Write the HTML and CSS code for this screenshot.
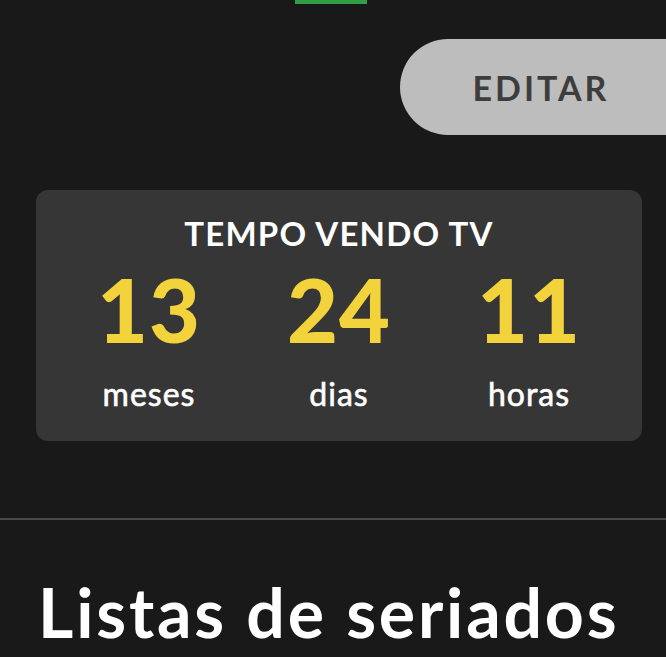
FILE: index.html
```html
<!DOCTYPE html>
<html lang="pt">
<head>
<meta charset="utf-8">
<link rel="stylesheet" href="styles.css">
</head>
<body>
<div class="page">
  <div class="tabbar"><span class="tab-indicator"></span></div>
  <div class="actions"><button class="edit-btn">EDITAR</button></div>
  <section class="stats-card">
    <h2 class="stats-title">TEMPO VENDO TV</h2>
    <div class="stats-grid">
      <div class="stat"><span class="stat-value">13</span><span class="stat-label">meses</span></div>
      <div class="stat"><span class="stat-value">24</span><span class="stat-label">dias</span></div>
      <div class="stat"><span class="stat-value">11</span><span class="stat-label">horas</span></div>
    </div>
  </section>
  <hr class="divider">
  <h1 class="section-title">Listas de seriados</h1>
</div>
</body>
</html>
```

FILE: styles.css
```css
html, body {
  margin: 0;
  padding: 0;
  background: #191919;
  overflow: hidden;
}
body {
  width: 666px;
  height: 657px;
  font-family: Lato, "Open Sans", sans-serif;
  color: #ffffff;
}
.page {
  display: flex;
  flex-direction: column;
}
.tabbar {
  height: 4px;
  display: flex;
  padding-left: 295px;
}
.tab-indicator {
  width: 72px;
  height: 4px;
  background: #2f9e44;
}
.actions {
  display: flex;
  justify-content: flex-end;
  padding-top: 35px;
}
.edit-btn {
  width: 266px;
  height: 96px;
  border: none;
  border-radius: 48px 0 0 48px;
  background: #bdbdbd;
  color: #3d3d3d;
  font-family: Lato, sans-serif;
  font-weight: 700;
  font-size: 34px;
  letter-spacing: 3px;
  padding: 0 0 0 16px;
  margin-right: 0;
}
.stats-card {
  margin: 55px 24px 0 36px;
  height: 251px;
  background: #363636;
  border-radius: 12px;
  display: flex;
  flex-direction: column;
  align-items: center;
  box-sizing: border-box;
  padding-top: 23px;
}
.stats-title {
  margin: 0;
  font-size: 33px;
  font-weight: 700;
  line-height: 40px;
  letter-spacing: 1.2px;
}
.stats-grid {
  display: grid;
  grid-template-columns: repeat(3, 190px);
  margin-top: 8px;
}
.stat {
  display: flex;
  flex-direction: column;
  align-items: center;
}
.stat-value {
  color: #f3d33b;
  font-size: 88px;
  font-weight: 900;
  line-height: 96px;
  letter-spacing: 1px;
}
.stat-label {
  font-size: 32px;
  font-weight: 400;
  line-height: 36px;
  margin-top: 19px;
  letter-spacing: 1px;
  -webkit-text-stroke: 0.6px #ffffff;
}
.divider {
  margin: 77px 0 0 0;
  border: none;
  height: 2px;
  background: #4a4a4a;
}
.section-title {
  margin: 52px 0 0 38px;
  font-size: 68px;
  font-weight: 700;
  line-height: 80px;
  letter-spacing: 2.8px;
}
```
